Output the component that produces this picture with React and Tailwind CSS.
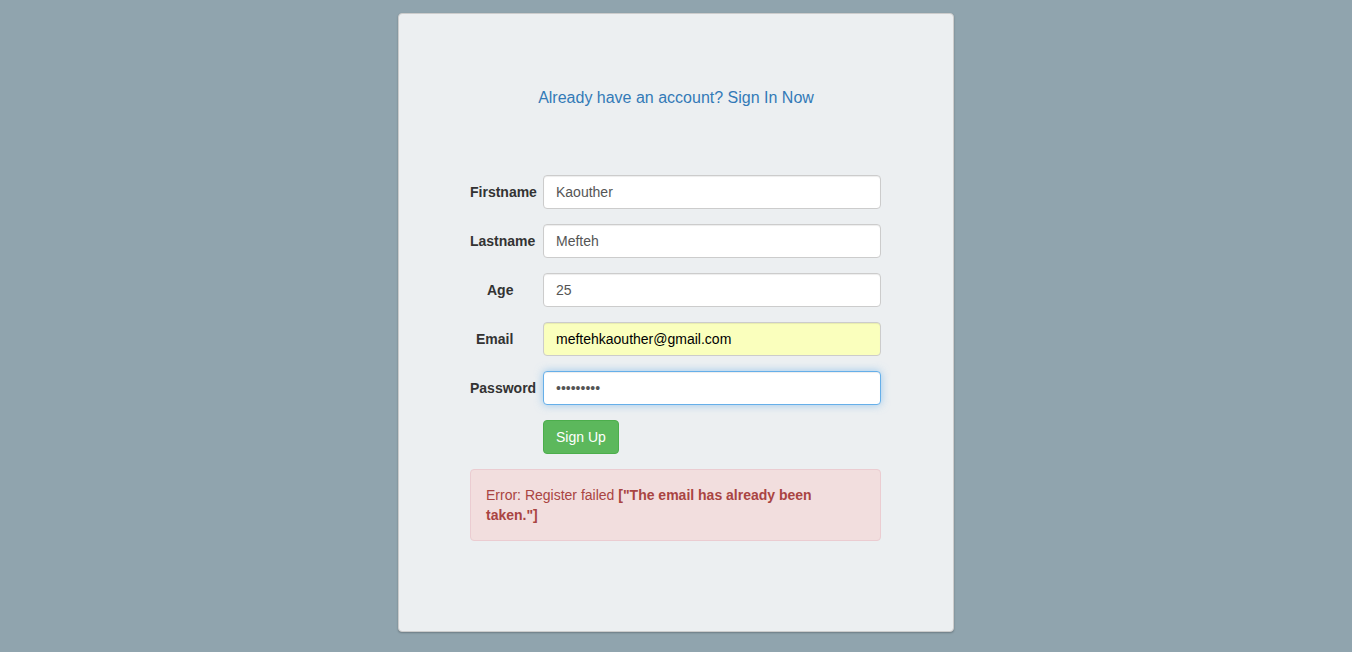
import { useState } from 'react'

const fields = [
  { label: 'Firstname', value: 'Kaouther', type: 'text', pad: 'pl-0' },
  { label: 'Lastname', value: 'Mefteh', type: 'text', pad: 'pl-0' },
  { label: 'Age', value: '25', type: 'text', pad: 'pl-[17px]' },
  { label: 'Email', value: 'meftehkaouther@gmail.com', type: 'email', pad: 'pl-[6px]', autofill: true },
  { label: 'Password', value: 'secret123', type: 'password', pad: 'pl-0', focus: true },
]

function Field({ field }) {
  const [value, setValue] = useState(field.value)

  let inputClass = 'border-[#ccc] bg-white text-[#555] shadow-[inset_0_1px_1px_rgba(0,0,0,0.075)]'
  if (field.autofill) inputClass = 'border-[#ccc] bg-[#faffbd] text-black shadow-[inset_0_1px_1px_rgba(0,0,0,0.075)]'
  if (field.focus) inputClass = 'border-[#66afe9] bg-white text-[#555] shadow-[inset_0_1px_1px_rgba(0,0,0,0.075),0_0_8px_rgba(102,175,233,0.6)]'

  return (
    <div className="flex items-center mb-[15px]">
      <label className={`w-[73px] shrink-0 text-[14px] font-bold text-[#333] ${field.pad}`}>
        {field.label}
      </label>
      <input
        type={field.type}
        value={value}
        onChange={(e) => setValue(e.target.value)}
        className={`w-[338px] h-[34px] px-[12px] py-[6px] text-[14px] border rounded-[4px] outline-none ${inputClass}`}
      />
    </div>
  )
}

export default function App() {
  return (
    <div className="min-h-[652px] bg-[#90a4ae] pt-[13px] font-['Liberation_Sans',Arial,sans-serif]">
      <div className="mx-auto w-[556px] h-[619px] bg-[#eceff1] border border-[#ccc] rounded-[4px] shadow-[0_1px_2px_rgba(0,0,0,0.25)]">
        <div className="pt-[72px] text-center">
          <a href="#" className="text-[16px] leading-[22px] text-[#337ab7]">
            Already have an account? Sign In Now
          </a>
        </div>

        <form className="mt-[65px] ml-[71px] w-[411px]" onSubmit={(e) => e.preventDefault()}>
          {fields.map((f) => (
            <Field key={f.label} field={f} />
          ))}

          <div className="flex mb-[15px]">
            <div className="w-[73px] shrink-0" />
            <button
              type="submit"
              className="h-[34px] px-[12px] text-[14px] text-white bg-[#5cb85c] border border-[#4cae4c] rounded-[4px]"
            >
              Sign Up
            </button>
          </div>

          <div className="p-[15px] bg-[#f2dede] border border-[#ebccd1] rounded-[4px] text-[14px] leading-[20px] text-[#a94442]">
            Error: Register failed <strong>["The email has already been taken."]</strong>
          </div>
        </form>
      </div>
    </div>
  )
}
